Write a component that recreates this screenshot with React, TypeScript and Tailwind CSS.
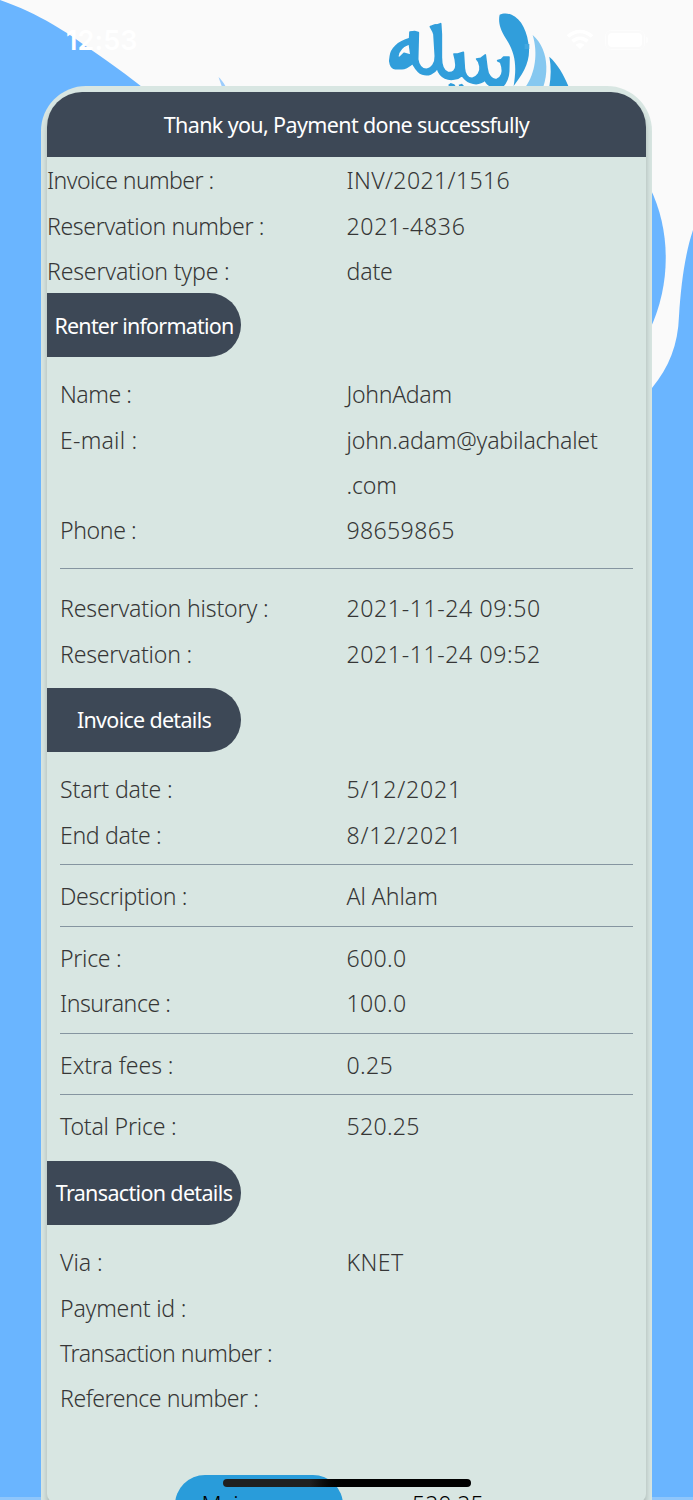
import React from 'react';

type FieldProp = {
  label: string;
  value?: React.ReactNode;
  labelClass?: string;
  valueClass?: string;
};

const Field: React.FC<FieldProp> = ({ label, value, labelClass = '', valueClass = '' }) => {
  return (
    <div className="grid grid-cols-2">
      <span className={`whitespace-nowrap ${labelClass}`}>{label}</span>
      <span className={`whitespace-nowrap ${valueClass}`}>{value}</span>
    </div>
  );
};

type SectionProp = {
  title: string;
  titleClass: string;
  children: React.ReactNode;
};

const Section: React.FC<SectionProp> = ({ title, titleClass, children }) => {
  return (
    <section>
      <h2
        className={`flex h-[64.5px] w-[194px] items-center justify-center whitespace-nowrap rounded-r-full bg-[#3d4856] text-[21.5px] font-normal text-white ${titleClass}`}
      >
        {title}
      </h2>
      <div className="px-[13px] pt-[15px] pb-[11px]">{children}</div>
    </section>
  );
};

const Divider = () => <hr className="mt-[6px] mb-[9.3px] border-t border-[#8595a0]" />;

const Background = () => {
  return (
    <svg className="absolute inset-0" width="693" height="1500" viewBox="0 0 693 1500">
      <rect width="693" height="1500" fill="#6ab5ff" />
      <path
        d="M0 0C40 14 68 33 90 49C112 64 128 76 142 87L300 200H652V388C669 367 678 345 679 316C681 284 685 254 693 230V0Z"
        fill="#fafafa"
      />
      <path d="M218.500 77C221 79 223 82 226 87H222Z" fill="#9ccdfd" />
      <path d="M650 188C671 230 671 285 650 329Z" fill="#6ab5ff" />
      <rect y="1497" width="693" height="3" fill="#8fc6fb" />
      {/* brand calligraphy */}
      <g transform="translate(380 0) scale(.3333)" fill="#319edb">
        <path
          fillRule="evenodd"
          stroke="#319edb"
          strokeWidth="5"
          strokeLinejoin="round"
          d="M90 96L104 95L115 98L113 178C115 195 125 208 139 208C156 206 167 189 166 168L162 103C160 93 155 87 151 80C159 78 163 73 171 75L182 71L184 102V172C184 192 189 212 203 217C218 221 229 210 228 195L226 179L222 162L233 162L250 157L253 205C254 221 262 236 277 235C292 232 303 216 300 199L296 185L290 177L302 175L316 165L321 204C323 225 336 242 351 238C366 232 369 215 366 200L362 187L353 182L364 179L371 171L387 171L386 214C385 234 378 249 367 260H335C326 256 319 249 315 240C304 250 286 253 270 247C259 243 252 235 246 226C235 237 213 242 195 234C182 228 176 219 172 205C162 221 144 228 127 222C111 216 106 203 98 190C88 198 78 206 66 206H46C31 203 27 185 31 169C33 147 53 126 89 116ZM88 131C68 138 55 153 53 170L59 173L72 160L93 166Z"
        />
        <path d="M205 254L212 249L223 253L228 260H207ZM236 254L246 251L254 260H238Z" />
        <path d="M359 44C368 40 382 39 395 44C424 56 444 96 447 145C450 189 426 226 401 258C411 196 406 159 378 116C357 84 355 61 359 44Z" />
        <path d="M458 105C484 127 499 164 499 199C500 221 496 242 490 260H437C465 221 475 160 458 105Z" fill="#86c8f0" />
        <path d="M508 170C532 191 551 224 566 260H508C513 230 514 200 508 170Z" />
        <path d="M434 132h14v15h-14z" fill="#43a7df" />
      </g>
    </svg>
  );
};

const StatusBar = () => {
  return (
    <div className="relative flex h-[86px] items-start justify-between pt-6 pr-12 pl-[66px] text-white">
      <span className="font-['Inter',sans-serif] text-[27px] leading-[34px] font-semibold tracking-[0.1px]">12:53</span>
      <div className="flex items-center gap-[11px] pt-[5px]">
        <svg width="28" height="22" viewBox="0 0 28 22" fill="none" stroke="white" strokeWidth="3.600">
          <path d="M2 7.500C9 .8 19 .8 26 7.500M6.500 12.300C11 8.200 17 8.200 21.500 12.300" />
          <path d="M14 20L9.500 15.800C12 13.600 16 13.600 18.500 15.800Z" fill="white" stroke="none" />
        </svg>
        <div className="relative h-5 w-10 rounded-md border border-[#fdfdfd] p-0.5">
          <div className="h-full rounded-[4px] bg-white" />
          <div className="absolute top-1.5 -right-[4px] h-1.5 w-[2px] rounded-r bg-[#fdfdfd]" />
        </div>
      </div>
    </div>
  );
};

const App: React.FC = () => {
  return (
    <div className="relative h-[1500px] w-[693px] overflow-hidden font-['Noto_Sans',sans-serif]">
      <Background />
      <StatusBar />

      <main className="relative mx-[41px] h-[1460px] overflow-hidden rounded-t-[45px] bg-[#d8e6e2] px-1.5 pt-1.5">
        <div className="h-[1410px] rounded-t-[35px] rounded-b-lg bg-[#d8e6e2] text-[23.1px] leading-[45.33px] font-[350] text-[#363636] shadow-[0_6px_6px_rgba(0,0,0,0.22)]">
          <h1 className="flex h-[64.7px] items-center justify-center rounded-t-[35px] bg-[#3d4856] text-[21.5px] font-normal tracking-[-0.63px] text-white">
            Thank you, Payment done successfully
          </h1>

          <div className="h-[136.3px] pt-[1.6px]">
            <Field label="Invoice number :" value="INV/2021/1516" labelClass="tracking-[-0.6px]" valueClass="tracking-[0.35px]" />
            <Field label="Reservation number :" value="2021-4836" labelClass="tracking-[-0.38px]" valueClass="tracking-[0.68px]" />
            <Field label="Reservation type :" value="date" labelClass="tracking-[-0.2px]" valueClass="tracking-[-0.15px]" />
          </div>

          <Section title="Renter information" titleClass="tracking-[-0.77px]">
            <Field label="Name :" value="JohnAdam" labelClass="tracking-[-0.48px]" valueClass="tracking-[-0.33px]" />
            <Field
              label="E-mail :"
              value={
                <>
                  john.adam@yabilachalet
                  <br />
                  .com
                </>
              }
              labelClass="tracking-[0.22px]"
              valueClass="tracking-[-0.19px]"
            />
            <Field label="Phone :" value="98659865" labelClass="tracking-[-0.4px]" valueClass="tracking-[0.34px]" />
            <hr className="mt-[14.2px] mb-[17.2px] border-t border-[#8595a0]" />
            <Field label="Reservation history :" value="2021-11-24 09:50" labelClass="tracking-[-0.18px]" valueClass="tracking-[0.6px]" />
            <Field label="Reservation :" value="2021-11-24 09:52" labelClass="tracking-[-0.22px]" valueClass="tracking-[0.6px]" />
          </Section>

          <Section title="Invoice details" titleClass="tracking-[-0.7px]">
            <Field label="Start date :" value="5/12/2021" labelClass="tracking-[-0.15px]" valueClass="tracking-[0.8px]" />
            <Field label="End date :" value="8/12/2021" labelClass="tracking-[-0.35px]" valueClass="tracking-[0.8px]" />
            <Divider />
            <Field label="Description :" value="Al Ahlam" labelClass="tracking-[-0.34px]" valueClass="tracking-[-0.05px]" />
            <Divider />
            <Field label="Price :" value="600.0" labelClass="tracking-[-0.3px]" valueClass="tracking-[0.35px]" />
            <Field label="Insurance :" value="100.0" labelClass="tracking-[-0.49px]" valueClass="tracking-[0.35px]" />
            <Divider />
            <Field label="Extra fees :" value="0.25" labelClass="tracking-[-0.08px]" valueClass="tracking-[0.3px]" />
            <Divider />
            <Field label="Total Price :" value="520.25" labelClass="tracking-[-0.22px]" valueClass="tracking-[0.28px]" />
          </Section>

          <Section title="Transaction details" titleClass="tracking-[-0.66px]">
            <Field label="Via :" value="KNET" labelClass="tracking-[-0.04px]" valueClass="tracking-[0.45px]" />
            <Field label="Payment id :" labelClass="tracking-[-0.21px]" />
            <Field label="Transaction number :" labelClass="tracking-[-0.5px]" />
            <Field label="Reference number :" labelClass="tracking-[-0.47px]" />
          </Section>

          <div className="mt-[42px] flex text-black">
            <button className="flex h-[68px] w-[168px] ml-32 items-start justify-center rounded-[30px] bg-[#299cda] pt-[7px] leading-[45px] tracking-[-0.4px]">
              Main menu
            </button>
            <span className="ml-[69px] pt-[7px] leading-[45px]">520.25</span>
          </div>
        </div>
      </main>

      {/* home indicator */}
      <div className="absolute top-[1479px] left-[223px] h-2 w-[248px] rounded-full bg-linear-to-r from-[#202020] from-35% to-black to-50%" />
    </div>
  );
};

export default App;
